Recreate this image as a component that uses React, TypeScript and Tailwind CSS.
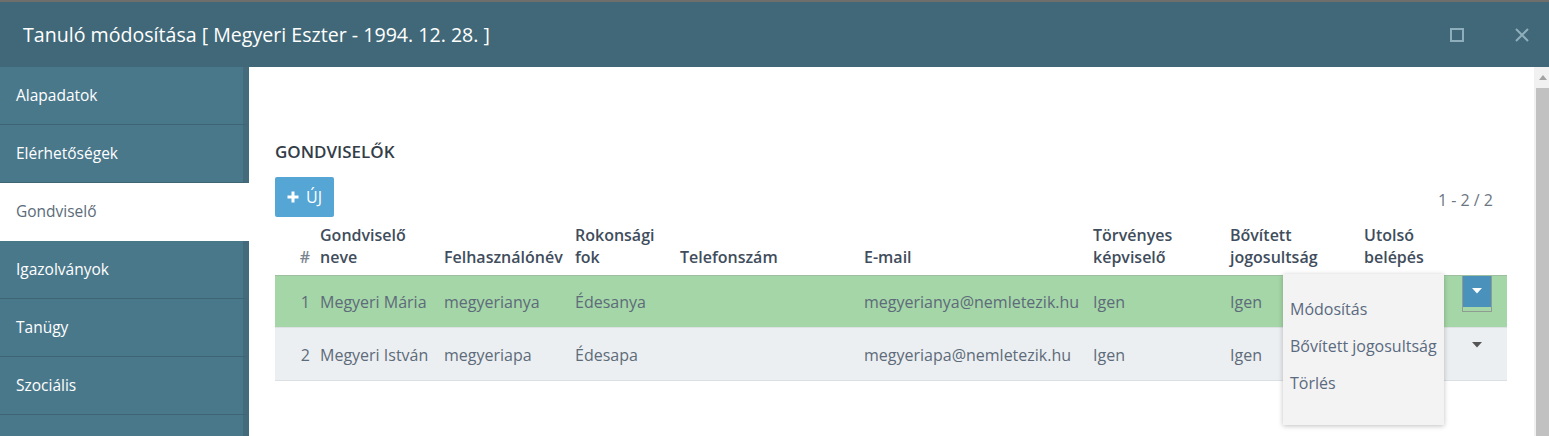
import React from "react";

const menu = ["Alapadatok", "Elérhetőségek", "Gondviselő", "Igazolványok", "Tanügy", "Szociális", ""];

const cols = [
  { label: ["#"], w: "w-[40px]" },
  { label: ["Gondviselő", "neve"], w: "w-[124px]" },
  { label: ["Felhasználónév"], w: "w-[131px]" },
  { label: ["Rokonsági", "fok"], w: "w-[105px]" },
  { label: ["Telefonszám"], w: "w-[184px]" },
  { label: ["E-mail"], w: "w-[229px]" },
  { label: ["Törvényes", "képviselő"], w: "w-[137px]" },
  { label: ["Bővített", "jogosultság"], w: "w-[134px]" },
  { label: ["Utolsó", "belépés"], w: "w-[96px]" },
  { label: [""], w: "w-[52px]" },
];

const rows = [
  { n: 1, name: "Megyeri Mária", user: "megyerianya", rel: "Édesanya", email: "megyerianya@nemletezik.hu" },
  { n: 2, name: "Megyeri István", user: "megyeriapa", rel: "Édesapa", email: "megyeriapa@nemletezik.hu" },
];

const Caret = ({ className }: { className: string }) => (
  <svg width="10" height="6" viewBox="0 0 10 6" className={className}>
    <path d="M0 0 L10 0 L5 5.5 Z" fill="currentColor" />
  </svg>
);

export default function App() {
  return (
    <div className="h-[436px] w-full overflow-hidden bg-white font-['Open_Sans',sans-serif]">
      <div className="h-[2px] bg-[#6f6e6c]" />
      <div className="flex h-[65px] items-center justify-between bg-[#416878] pl-[23px] pr-[19px]">
        <span className="text-[19.6px] text-white">Tanuló módosítása [ Megyeri Eszter - 1994. 12. 28. ]</span>
        <div className="flex items-center gap-[50px] text-[#8eaebb]">
          <svg width="14" height="14" viewBox="0 0 14 14">
            <rect x="1" y="1" width="12" height="12" fill="none" stroke="currentColor" strokeWidth="2" />
          </svg>
          <svg width="16" height="16" viewBox="0 0 16 16">
            <path d="M2 2 L14 14 M14 2 L2 14" stroke="currentColor" strokeWidth="2" />
          </svg>
        </div>
      </div>

      <div className="flex h-[369px]">
        {/* sidebar */}
        <div className="flex w-[249px] flex-col overflow-hidden">
          {menu.map((m) =>
            m === "Gondviselő" ? (
              <div key={m} className="flex h-[58px] shrink-0 items-center bg-white pl-[16px] text-[15.5px] text-[#5b6b79]">
                {m}
              </div>
            ) : (
              <div key={m} className="flex h-[58px] shrink-0 border-r-[6px] border-b border-r-[#436b7c] border-b-[#3f6575] bg-[#4a788b]">
                <span className="flex items-center pl-[16px] text-[15.5px] font-medium text-white">{m}</span>
              </div>
            )
          )}
        </div>

        {/* content */}
        <div className="relative flex-1 pl-[26px] pr-[27px] pt-[74px]">
          <div className="text-[17px] font-semibold leading-[22px] text-[#333d47]">GONDVISELŐK</div>
          <div className="mt-[14px] flex items-center justify-between pr-[14px]">
            <button className="flex h-[40px] w-[59px] items-center justify-center gap-[7px] rounded-[2px] bg-[#55a6d5] text-[16px] text-white">
              <svg width="12" height="12" viewBox="0 0 12 12">
                <path d="M6 0.5 V11.5 M0.5 6 H11.5" stroke="white" strokeWidth="3" />
              </svg>
              ÚJ
            </button>
            <span className="mt-[6px] text-[16px] text-[#6b7682]">1 - 2 / 2</span>
          </div>

          <table className="mt-[5px] w-[1232px] table-fixed border-collapse text-[16px]">
            <thead>
              <tr className="h-[53px]">
                {cols.map((c, i) => (
                  <th
                    key={i}
                    className={`${c.w} px-[5px] pb-[7px] align-bottom font-semibold leading-[22px] text-[#3f4d5c] ${i === 0 ? "text-right font-normal text-[#7a8590]" : "text-left"}`}
                  >
                    {c.label.map((l, j) => (
                      <div key={j}>{l}</div>
                    ))}
                  </th>
                ))}
              </tr>
            </thead>
            <tbody className="text-[#5d6b7a]">
              {rows.map((r, i) => (
                <tr
                  key={r.n}
                  className={i === 0 ? "h-[52px] border-t border-[#9dbf9f] bg-[#a5d6a7]" : "h-[53px] border-y border-t-[#dde0e2] border-b-[#dde0e2] bg-[#eceff1]"}
                >
                  <td className="px-[5px] pt-[2px] text-right">{r.n}</td>
                  <td className="px-[5px] pt-[2px] whitespace-nowrap">{r.name}</td>
                  <td className="px-[5px] pt-[2px]">{r.user}</td>
                  <td className="px-[5px] pt-[2px]">{r.rel}</td>
                  <td className="px-[5px]"></td>
                  <td className="px-[5px] pt-[2px] whitespace-nowrap">{r.email}</td>
                  <td className="px-[5px] pt-[2px]">Igen</td>
                  <td className="px-[5px] pt-[2px]">Igen</td>
                  <td className="px-[5px]"></td>
                  <td className="pl-[7px] pr-[5px] align-top">
                    {i === 0 ? (
                      <div className="h-[36px] w-[30px] border border-t-0 border-[#8f9c92]">
                        <div className="flex h-[31px] items-center justify-center bg-[#4a91bb]">
                          <Caret className="text-white" />
                        </div>
                      </div>
                    ) : (
                      <div className="flex w-[30px] justify-center pt-[14px]">
                        <Caret className="text-[#555]" />
                      </div>
                    )}
                  </td>
                </tr>
              ))}
            </tbody>
          </table>

          {/* dropdown menu */}
          <div className="absolute left-[1034px] top-[207px] flex h-[151px] w-[161px] flex-col bg-[#f3f3f3] pt-[16px] text-[16px] text-[#5a6a80] shadow-[0_1px_5px_rgba(0,0,0,0.25)]">
            {["Módosítás", "Bővített jogosultság", "Törlés"].map((it) => (
              <div key={it} className="flex h-[37px] items-center whitespace-nowrap pl-[7px]">
                {it}
              </div>
            ))}
          </div>
        </div>

        {/* scrollbar */}
        <div className="flex w-[15px] flex-col bg-[#f1f1f1]">
          <div className="flex h-[21px] items-center justify-center pl-[2px]">
            <svg width="8" height="5" viewBox="0 0 8 5">
              <path d="M0 5 L4 0 L8 5 Z" fill="#a3a3a3" />
            </svg>
          </div>
          <div className="ml-[2px] flex-1 bg-[#c1c1c1]" />
        </div>
      </div>
    </div>
  );
}
